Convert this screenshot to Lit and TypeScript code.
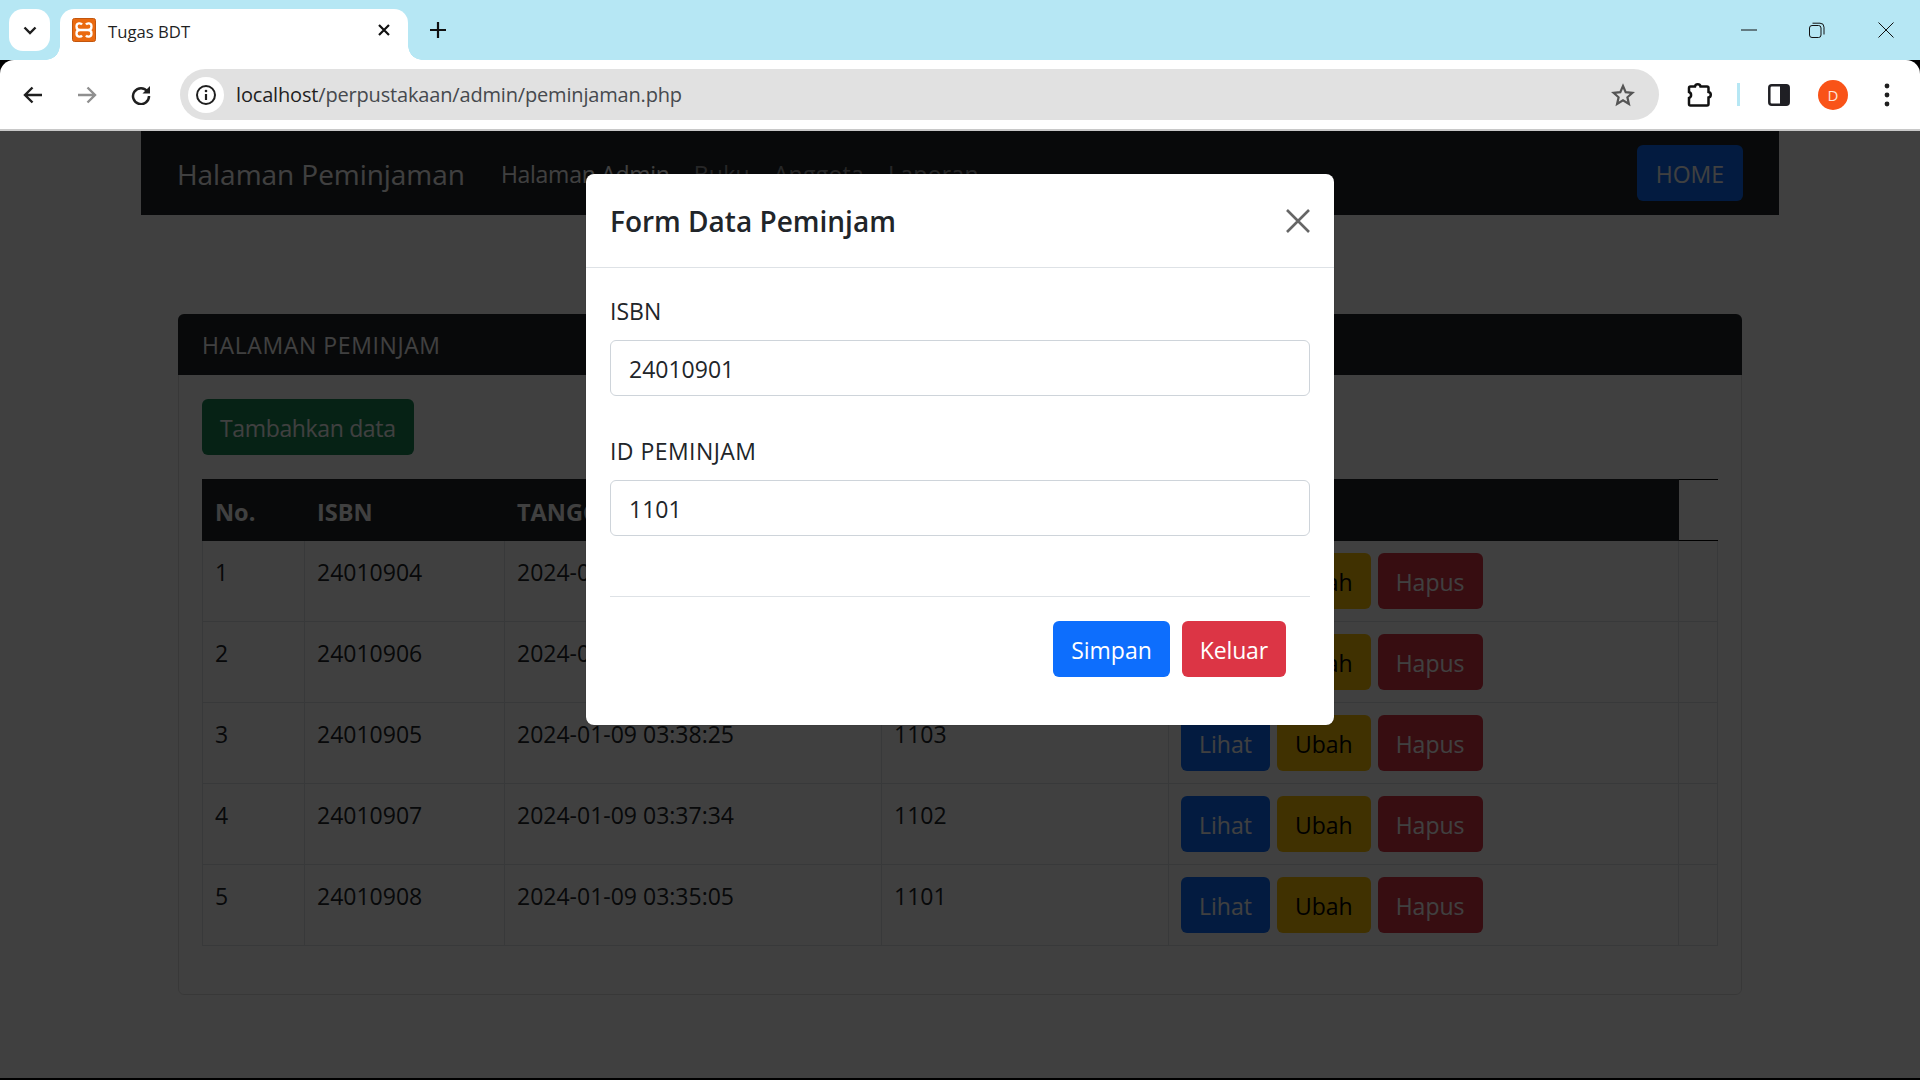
import { LitElement, html, css } from "lit";
import { customElement } from "lit/decorators.js";

const rows = [
  { isbn: "24010904", date: "2024-01-09 03:41:12", id: "1105" },
  { isbn: "24010906", date: "2024-01-09 03:39:47", id: "1104" },
  { isbn: "24010905", date: "2024-01-09 03:38:25", id: "1103" },
  { isbn: "24010907", date: "2024-01-09 03:37:34", id: "1102" },
  { isbn: "24010908", date: "2024-01-09 03:35:05", id: "1101" },
];

@customElement("app-root")
export class AppRoot extends LitElement {
  static styles = css`
    :host {
      display: block;
      width: 1920px;
      height: 1080px;
      overflow: hidden;
      background: #000;
      font-family: "Open Sans", "Noto Sans", sans-serif;
      font-size: 23px;
      color: #212529;
    }
    * {
      box-sizing: border-box;
    }

    /* Browser chrome */
    .tabstrip {
      height: 60px;
      background: #b6e7f4;
      display: flex;
      align-items: flex-start;
      padding-top: 9px;
    }
    .tab-menu {
      width: 41px;
      height: 42px;
      margin-left: 9px;
      background: #fff;
      border-radius: 14px;
      display: flex;
      align-items: center;
      justify-content: center;
    }
    .tab {
      position: relative;
      width: 348px;
      height: 51px;
      margin-left: 10px;
      padding: 0 12px 9px;
      background: #fff;
      border-radius: 14px 14px 0 0;
      display: flex;
      align-items: center;
    }
    .tab::before,
    .tab::after {
      content: "";
      position: absolute;
      bottom: 0;
      width: 14px;
      height: 14px;
    }
    .tab::before {
      left: -14px;
      background: radial-gradient(circle at 0 0, transparent 13.5px, #fff 14px);
    }
    .tab::after {
      right: -14px;
      background: radial-gradient(circle at 100% 0, transparent 13.5px, #fff 14px);
    }
    .tab-title {
      margin-left: 12px;
      padding-top: 2px;
      font-size: 16.7px;
      color: #1f1f1f;
    }
    .tab-close {
      margin-left: auto;
      width: 24px;
      height: 24px;
      display: flex;
      align-items: center;
      justify-content: center;
    }
    .new-tab {
      width: 36px;
      height: 42px;
      margin-left: 12px;
      display: flex;
      align-items: center;
      justify-content: center;
    }
    .window-controls {
      margin-left: auto;
      margin-top: -9px;
      display: flex;
    }
    .window-controls div {
      width: 68.5px;
      height: 59px;
      display: flex;
      align-items: center;
      justify-content: center;
    }
    .toolbar {
      height: 69px;
      background: #fff;
      border-radius: 14px 14px 0 0;
      display: flex;
      align-items: center;
      padding: 0 11px;
    }
    .tool {
      width: 44px;
      height: 44px;
      flex: none;
      display: flex;
      align-items: center;
      justify-content: center;
    }
    .tool + .tool {
      margin-left: 10px;
    }
    .omnibox {
      width: 1479px;
      height: 51px;
      margin-left: 17px;
      margin-right: 19px;
      background: #e1e1e1;
      border-radius: 26px;
      display: flex;
      align-items: center;
      padding: 0 24px 0 8px;
      flex: none;
    }
    .site-chip {
      width: 36px;
      height: 36px;
      background: #fff;
      border-radius: 50%;
      display: flex;
      align-items: center;
      justify-content: center;
    }
    .url {
      margin-left: 12px;
      font-size: 20px;
      letter-spacing: -0.17px;
      color: #46494e;
    }
    .url b {
      font-weight: 400;
      color: #1f1f1f;
    }
    .star {
      margin-left: auto;
      display: flex;
    }
    .separator {
      width: 3px;
      height: 23px;
      margin: 0 17px 0 15px;
      background: #b6e7f4;
      flex: none;
    }
    .avatar {
      width: 30px;
      height: 30px;
      border-radius: 50%;
      background: #f95318;
      color: #ffe3d8;
      font-size: 15px;
      display: flex;
      align-items: center;
      justify-content: center;
    }
    .toolbar-rule {
      height: 2px;
      background: #c8c8c8;
    }

    /* Page */
    .page {
      position: relative;
      height: 947px;
      background: #fff;
      overflow: hidden;
    }
    .end-line {
      height: 2px;
      background: #000;
    }
    .navbar {
      height: 84px;
      margin: 0 141px;
      padding: 2px 36px 0 36px;
      background: #212529;
      display: flex;
      align-items: center;
    }
    .brand {
      font-size: 28px;
      letter-spacing: -0.05px;
      color: #fff;
      margin-right: 24px;
    }
    .nav-link {
      padding: 0 12px;
      letter-spacing: 0.25px;
      color: rgba(255, 255, 255, 0.55);
    }
    .nav-link.active {
      letter-spacing: -0.27px;
      color: #fff;
    }
    .btn {
      height: 56px;
      padding: 2px 18px 0;
      border-radius: 6px;
      display: inline-flex;
      align-items: center;
      justify-content: center;
      color: #fff;
      white-space: nowrap;
      flex: none;
    }
    .primary {
      background: #0d6efd;
    }
    .success {
      background: #198754;
      letter-spacing: -0.35px;
    }
    .warning {
      background: #ffc107;
      color: #000;
    }
    .danger {
      background: #dc3545;
    }
    .keluar {
      letter-spacing: -0.15px;
    }
    .home {
      margin: -2px 0 0 auto;
      padding: 2px 19px 0;
      letter-spacing: 0;
    }
    .card {
      width: 1564px;
      margin: 99px 0 0 178px;
      border: 1px solid rgba(0, 0, 0, 0.125);
      border-radius: 6px;
    }
    .card-header {
      height: 61px;
      margin: -1px -1px 0;
      padding: 1px 24px 0;
      background: #212529;
      color: #fff;
      letter-spacing: 0.6px;
      border-radius: 6px 6px 0 0;
      display: flex;
      align-items: center;
    }
    .card-body {
      padding: 24px 23px 48px;
    }
    table {
      width: 1515px;
      margin-top: 24px;
      border-collapse: collapse;
      table-layout: fixed;
    }
    th,
    td {
      padding: 12px;
      border: 1px solid #dee2e6;
      text-align: left;
      vertical-align: top;
      line-height: 38px;
    }
    th {
      height: 61px;
      background: #212529;
      border-color: #212529;
      color: #fff;
      font-size: 23.5px;
      font-weight: 700;
      padding-top: 13px;
      padding-bottom: 0;
    }
    th.blank {
      background: none;
      border-left-color: #dee2e6;
      border-right-color: transparent;
      border-top-color: #000;
      border-bottom-color: #000;
    }
    .actions {
      display: flex;
      gap: 7px;
    }

    /* Modal */
    .backdrop {
      position: absolute;
      inset: 0;
      background: rgba(0, 0, 0, 0.75);
      display: flex;
      justify-content: center;
      align-items: flex-start;
      padding-top: 43px;
    }
    .modal {
      width: 748px;
      height: 551px;
      background: #fff;
      border-radius: 8px;
      box-shadow: 0 0 1px rgba(0, 0, 0, 0.5);
    }
    .modal-header {
      height: 94px;
      padding: 1px 24px 0;
      border-bottom: 1px solid #dee2e6;
      display: flex;
      align-items: center;
      justify-content: space-between;
    }
    .modal-title {
      font-size: 28px;
      font-weight: 600;
    }
    .modal-body {
      padding: 24px 24px 0;
    }
    .field {
      margin-bottom: 36px;
    }
    label {
      display: block;
      line-height: 38px;
      margin-bottom: 10px;
    }
    label.wide {
      letter-spacing: 0.45px;
    }
    .input {
      height: 56px;
      padding: 2px 18px 0;
      border: 1.5px solid #ced4da;
      border-radius: 6px;
      display: flex;
      align-items: center;
    }
    .modal-foot-wrap {
      padding: 0 24px;
    }
    .modal-footer {
      margin-top: 60px;
      padding: 24px;
      border-top: 1px solid #dee2e6;
      display: flex;
      justify-content: flex-end;
      gap: 12px;
    }
  `;

  private renderChrome() {
    return html`
      <div class="tabstrip">
        <div class="tab-menu">
          <svg width="14" height="9" viewBox="0 0 14 9"><path d="M1.5 1.5 7 7l5.5-5.5" fill="none" stroke="#1f1f1f" stroke-width="2.4"/></svg>
        </div>
        <div class="tab">
          <svg width="24" height="24" viewBox="0 0 24 24">
            <rect x="0.5" y="0.5" width="23" height="23" rx="2" fill="#ea6a10" stroke="#c2560e"/>
            <path d="M10 6.500C9 5 4.500 4.500 4.500 8.500c0 2 1.500 3.500 3.500 3.500-2 0-3.500 1.500-3.500 3.500 0 4 4.500 3.500 5.500 2M14 6.500c1-1.500 5.500-2 5.500 2 0 2-1.500 3.500-3.500 3.500 2 0 3.500 1.500 3.500 3.500 0 4-4.500 3.500-5.500 2M8 12h8" fill="none" stroke="#fff" stroke-width="2.300"/>
          </svg>
          <span class="tab-title">Tugas BDT</span>
          <span class="tab-close">
            <svg width="12" height="12" viewBox="0 0 12 12"><path d="m1 1 10 10M11 1 1 11" stroke="#111" stroke-width="2.2"/></svg>
          </span>
        </div>
        <div class="new-tab">
          <svg width="16" height="16" viewBox="0 0 16 16"><path d="M8 0v16M0 8h16" stroke="#111" stroke-width="2.2"/></svg>
        </div>
        <div class="window-controls">
          <div><svg width="16" height="2" viewBox="0 0 16 2"><path d="M0 1h16" stroke="#111" stroke-width="1"/></svg></div>
          <div>
            <svg width="16" height="16" viewBox="0 0 16 16" fill="none" stroke="#111" stroke-width="1">
              <rect x="0.5" y="3.5" width="11.5" height="12" rx="2.5"/>
              <path d="M3.500 1.200h7.500a4 4 0 0 1 4 4v7.300"/>
            </svg>
          </div>
          <div><svg width="16" height="16" viewBox="0 0 16 16"><path d="m.5.5 15 15M15.500.5l-15 15" stroke="#111" stroke-width="1"/></svg></div>
        </div>
      </div>
      <div class="toolbar">
        <div class="tool">
          <svg width="20" height="18" viewBox="0 0 20 18"><path d="M19 9H3M9.500 1.500 2 9l7.500 7.500" fill="none" stroke="#1f1f1f" stroke-width="2.4"/></svg>
        </div>
        <div class="tool">
          <svg width="20" height="18" viewBox="0 0 20 18"><path d="M1 9h16M10.500 1.500 18 9l-7.500 7.500" fill="none" stroke="#8f8f8f" stroke-width="2.4"/></svg>
        </div>
        <div class="tool">
          <svg width="20" height="20" viewBox="0 0 20 20"><path d="M16.500 6.500A8 8 0 1 0 18 11" fill="none" stroke="#1f1f1f" stroke-width="2.500"/><path d="M19 1v7.500h-7.500z" fill="#1f1f1f"/></svg>
        </div>
        <div class="omnibox">
          <div class="site-chip">
            <svg width="22" height="22" viewBox="0 0 22 22">
              <circle cx="11" cy="11" r="9" fill="none" stroke="#1f1f1f" stroke-width="2"/>
              <path d="M11 10v6" stroke="#1f1f1f" stroke-width="2.200"/>
              <circle cx="11" cy="7" r="1.300" fill="#1f1f1f"/>
            </svg>
          </div>
          <span class="url"><b>localhost</b>/perpustakaan/admin/peminjaman.php</span>
          <span class="star">
            <svg width="24" height="24" viewBox="0 0 24 24"><path d="m12 3 2.700 6.200 6.800.6-5.100 4.500 1.500 6.600-5.900-3.500-5.900 3.500 1.500-6.600-5.100-4.500 6.800-.6z" fill="none" stroke="#555" stroke-width="2.200"/></svg>
          </span>
        </div>
        <div class="tool">
          <svg width="26" height="25" viewBox="0 0 26 25">
            <path d="M3.500 4.500H8a2.800 2.800 0 0 1 5.500 0H20a1.500 1.500 0 0 1 1.500 1.500v4a2.800 2.800 0 0 1 0 5.500V22a1.500 1.500 0 0 1-1.500 1.500H3.500A1.500 1.500 0 0 1 2 22v-6a3.200 3.200 0 0 0 0-6V6a1.500 1.500 0 0 1 1.500-1.500z" fill="#fff" stroke="#111" stroke-width="2.500"/>
          </svg>
        </div>
        <div class="separator"></div>
        <div class="tool">
          <svg width="22" height="22" viewBox="0 0 22 22">
            <rect x="1.300" y="1.300" width="19.400" height="19.400" rx="2.500" fill="#fff" stroke="#1f1f24" stroke-width="2.500"/>
            <rect x="12" y="1.500" width="8.500" height="19" fill="#1f1f24"/>
          </svg>
        </div>
        <div class="tool"><div class="avatar">D</div></div>
        <div class="tool">
          <svg width="6" height="24" viewBox="0 0 6 24" fill="#1f1f1f"><circle cx="3" cy="3" r="2.400"/><circle cx="3" cy="12" r="2.400"/><circle cx="3" cy="21" r="2.400"/></svg>
        </div>
      </div>
      <div class="toolbar-rule"></div>
    `;
  }

  private renderTable() {
    return html`
      <table>
        <colgroup>
          <col style="width:102px" /><col style="width:200px" /><col style="width:377px" />
          <col style="width:287px" /><col style="width:510px" /><col style="width:39px" />
        </colgroup>
        <thead>
          <tr>
            <th>No.</th>
            <th>ISBN</th>
            <th>TANGGAL PINJAM</th>
            <th>ID PEMINJAM</th>
            <th>AKSI</th>
            <th class="blank"></th>
          </tr>
        </thead>
        <tbody>
          ${rows.map(
            (r, i) => html`
              <tr>
                <td>${i + 1}</td>
                <td>${r.isbn}</td>
                <td>${r.date}</td>
                <td>${r.id}</td>
                <td>
                  <div class="actions">
                    <span class="btn primary">Lihat</span>
                    <span class="btn warning">Ubah</span>
                    <span class="btn danger">Hapus</span>
                  </div>
                </td>
                <td></td>
              </tr>
            `
          )}
        </tbody>
      </table>
    `;
  }

  render() {
    return html`
      ${this.renderChrome()}
      <div class="page">
        <nav class="navbar">
          <span class="brand">Halaman Peminjaman</span>
          <span class="nav-link active">Halaman Admin</span>
          <span class="nav-link">Buku</span>
          <span class="nav-link">Anggota</span>
          <span class="nav-link">Laporan</span>
          <span class="btn primary home">HOME</span>
        </nav>
        <section class="card">
          <div class="card-header">HALAMAN PEMINJAM</div>
          <div class="card-body">
            <span class="btn success">Tambahkan data</span>
            ${this.renderTable()}
          </div>
        </section>
        <div class="backdrop">
          <div class="modal">
            <div class="modal-header">
              <span class="modal-title">Form Data Peminjam</span>
              <svg width="24" height="24" viewBox="0 0 24 24"><path d="m1 1 22 22M23 1 1 23" stroke="#666" stroke-width="2.600"/></svg>
            </div>
            <div class="modal-body">
              <div class="field">
                <label>ISBN</label>
                <div class="input">24010901</div>
              </div>
              <div class="field">
                <label class="wide">ID PEMINJAM</label>
                <div class="input">1101</div>
              </div>
            </div>
            <div class="modal-foot-wrap">
              <div class="modal-footer">
                <span class="btn primary">Simpan</span>
                <span class="btn danger keluar">Keluar</span>
              </div>
            </div>
          </div>
        </div>
      </div>
      <div class="end-line"></div>
    `;
  }
}
